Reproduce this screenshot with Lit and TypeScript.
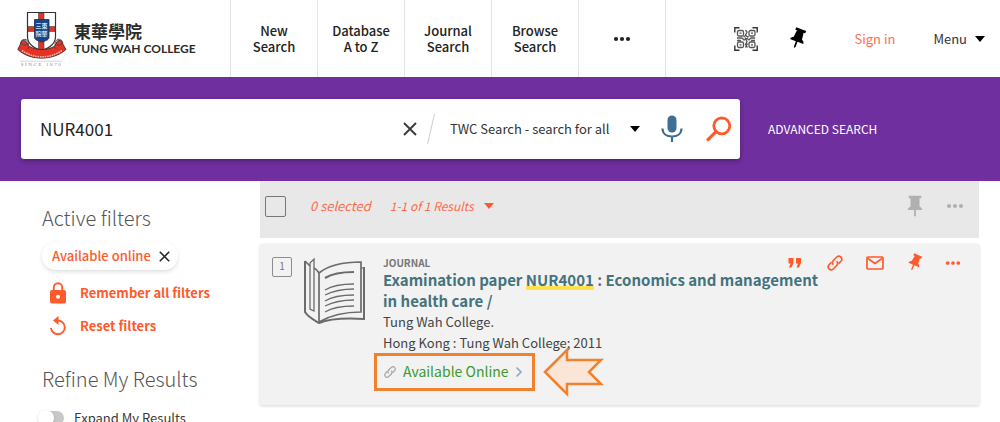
import { LitElement, html, css, svg } from "lit";
import { customElement, state } from "lit/decorators.js";

const pinShape = svg`<path fill="currentColor" d="M4 0h12v3h-2l1 8c2 1 3 2 3 4h-7v6l-1 2-1-2v-6H2c0-2 1-3 3-4l1-8H4z"/>`;

const icons = {
  pin: html`<svg width="18" height="22" viewBox="0 0 20 23" aria-hidden="true"><path fill="currentColor" d="M3 0h14v3h-2v9c2 1 3 2 3 4h-7v7H9v-7H2c0-2 1-3 3-4V3H3z"/></svg>`,
  pinTilted: html`<svg width="22" height="24" viewBox="-2 -1 25 26" aria-hidden="true"><g transform="rotate(20 10 12)">${pinShape}</g></svg>`,
  pinSmall: html`<svg width="18" height="20" viewBox="-2 -1 25 26" aria-hidden="true"><g transform="rotate(24 10 12)">${pinShape}</g></svg>`,
  dots: html`<svg width="18" height="6" viewBox="0 0 18 6" aria-hidden="true"><g fill="currentColor"><circle cx="3" cy="3" r="2.1"/><circle cx="9" cy="3" r="2.1"/><circle cx="15" cy="3" r="2.1"/></g></svg>`,
  caret: html`<svg width="10" height="6" viewBox="0 0 10 6" aria-hidden="true"><path fill="currentColor" d="M0 0h10L5 6z"/></svg>`,
  close: html`<svg class="x" viewBox="0 0 14 14" aria-hidden="true"><path d="M1 1l12 12M13 1L1 13" fill="none" stroke="currentColor" stroke-width="1.9"/></svg>`,
  mic: html`<svg width="22" height="28" viewBox="0 0 22 28" aria-hidden="true"><rect x="6.5" y="0.5" width="9" height="17" rx="4.500" fill="#3d7096"/><path d="M1.500 13.500c0 5 4 8 9.500 8s9.500-3 9.500-8M11 21.500V27" fill="none" stroke="#3d7096" stroke-width="2.200"/></svg>`,
  search: html`<svg width="26" height="26" viewBox="0 0 26 26" aria-hidden="true"><circle cx="15.800" cy="9.800" r="8" fill="none" stroke="#ff5a2b" stroke-width="2.800"/><path d="M9.800 15.800L2 23.600" stroke="#ff5a2b" stroke-width="3.200" stroke-linecap="round"/></svg>`,
  qr: html`<svg width="24" height="24" viewBox="0 0 24 24" fill="none" stroke="#555" aria-hidden="true">
    <path d="M.8 5.500V.8h4.700M18.500.8h4.700v4.700M23.200 18.500v4.700h-4.700M5.500 23.200H.8v-4.700" stroke-width="1.400" stroke="#333"/>
    <g stroke-width="1.300"><rect x="3.500" y="3.500" width="6" height="5.500" rx="1.500"/><rect x="15" y="3.500" width="6" height="5.500" rx="1.500"/><rect x="3.500" y="15" width="6" height="5.500" rx="1.500"/><rect x="15" y="15" width="6" height="5.500" rx="1.500"/>
    <path d="M5.500 6.200h2M17 6.200h2M5.500 17.800h2M17 17.800h2M11.500 3l1.500 2-1.500 3 2 2 1.500-.5M3 11h5l2 2 3-1.500 2 1.500 2-2h4M3 13.500h4M11 10.500l2 4-1.500 3 2 3M9.500 10l2-1.500M17 13.500h4M11.500 20.500l2-4"/></g></svg>`,
  lock: html`<svg width="18" height="22" viewBox="0 0 18 22" aria-hidden="true"><path d="M4.800 9V5.500a4.200 4.200 0 0 1 8.400 0V9" fill="none" stroke="currentColor" stroke-width="1.900"/><path fill="currentColor" fill-rule="evenodd" d="M3 8h12a2 2 0 0 1 2 2v9.500a2 2 0 0 1-2 2H3a2 2 0 0 1-2-2V10a2 2 0 0 1 2-2zm6 4.700a2 2 0 1 0 0 4 2 2 0 0 0 0-4z"/></svg>`,
  reset: html`<svg width="18" height="20" viewBox="0 0 18 20" aria-hidden="true"><path d="M8 4.500h1.200A6.900 6.900 0 1 1 2 12" fill="none" stroke="currentColor" stroke-width="1.900"/><path fill="currentColor" d="M9.500 0v9L4 4.500z"/></svg>`,
  quote: html`<svg width="14" height="10" viewBox="0 0 14 10" aria-hidden="true"><path fill="currentColor" d="M.5 0h5v5L3.500 9.500H1L2.500 5.500h-2zM8 0h5v5l-2 4.500H8.500L10 5.500H8z"/></svg>`,
  link: html`<svg class="chain" viewBox="0 0 18 18" fill="none" stroke="currentColor" stroke-width="1.600" aria-hidden="true"><path d="M7.300 10.700a3 3 0 0 1 0-4.200l3.700-3.700a3 3 0 0 1 4.200 4.200l-2.600 2.600"/><path d="M10.700 7.300a3 3 0 0 1 0 4.200L7 15.200A3 3 0 0 1 2.800 11l2.600-2.600"/></svg>`,
  mail: html`<svg width="18" height="14" viewBox="0 0 18 14" aria-hidden="true"><rect x="1" y="1" width="16" height="12" rx="1" fill="none" stroke="currentColor" stroke-width="1.700"/><path d="M2 2.500l7 5 7-5" fill="none" stroke="currentColor" stroke-width="1.700"/></svg>`,
  chevron: html`<svg width="8" height="12" viewBox="0 0 8 12" aria-hidden="true"><path d="M1.500 1.500L6 6l-4.500 4.500" fill="none" stroke="#8fa9bf" stroke-width="1.700"/></svg>`,
};

const crest = html`<svg width="50" height="56" viewBox="0 0 50 56" role="img" aria-label="Crest">
  <path d="M10.500 1.500h28v24c0 7-6 11.500-14 14-8-2.500-14-7-14-14z" fill="#fff" stroke="#333" stroke-width="1.200"/>
  <path d="M21.500 2h5.500v37l-2.500 1-3-1zM11 15.500h27v5H11z" fill="#e23324" stroke="#444" stroke-width=".6"/>
  <path d="M17.500 8.500h14.500v18c0 2.500-4 3.500-7.200 4.500-3.200-1-7.300-2-7.300-4.500z" fill="#17458c" stroke="#222b45" stroke-width=".8"/>
  <g fill="#cfe0f5" font-family="Noto Sans CJK TC, sans-serif" font-size="6" font-weight="700"><text x="18.500" y="16.500">三東</text><text x="18.500" y="25">院華</text></g>
  <path d="M10 32c-1-4-7-3-6.500 1L.8 38.500C13 50 36 50 49 38.500L45.800 33c.5-4-5.500-5-6.500-1l-2 3.500c-8 4-17 4-25 0z" fill="#e23324" stroke="#43282a" stroke-width=".9"/>
  <path d="M9 29c-3-2-6 1-4 4 2 2 5 1 5-1M40.500 29c3-2 6 1 4 4-2 2-5 1-5-1M12.300 35.500l-2 2.500M37.300 35.500l2 2.500M8 28c3 1 4 4 3 7M41.500 28c-3 1-4 4-3 7" fill="none" stroke="#444" stroke-width=".9"/>
  <path d="M5 39.500c12 8.500 28 8.500 40 0" fill="none" stroke="#f9b5ab" stroke-width="1.600" stroke-dasharray="1.600 .8"/>
  <path d="M3 50.200h42" stroke="#bbb" stroke-width=".6"/>
  <text x="24.500" y="55" text-anchor="middle" fill="#888" font-family="Liberation Serif, serif" font-size="5" letter-spacing="1.600">SINCE 1870</text>
</svg>`;

const book = html`<svg width="64" height="68" viewBox="0 0 64 68" fill="none" stroke="#6b6b6b" aria-hidden="true">
  <path d="M2 4v51c3 5 9 8 14 11 12-5 28-5 45-4V10" stroke-width="2"/>
  <path d="M2 4l5 5M11 11c2 1 4 3 5 5v50M16 16C26 8 43 5 58 5v50c-15 0-30 3-42 10" stroke-width="1.700"/>
  <path d="M7 7v45l4 2V2L7 6z" stroke-width="1.300"/>
  <path d="M58 11h3" stroke-width="1.200"/>
  <path d="M22 21c8-5 18-6 29-6" stroke-width="2.200"/>
  <path d="M22 33c8-5 18-6 29-6M22 38c8-4 18-6 29-6M22 44c8-5 18-6 29-6M22 49c8-4 18-6 29-6M22 55c8-5 18-6 29-6" stroke-width="1.300"/>
</svg>`;

@customElement("app-root")
export class AppRoot extends LitElement {
  @state() private query = "NUR4001";

  static styles = css`
    :host {
      display: block;
      height: 100vh;
      overflow: hidden;
      background: #fff;
      color: #3a3a3a;
      font-family: "Noto Sans CJK SC", "Noto Sans", sans-serif;
      font-size: 13px;
      line-height: 20px;
    }
    * { box-sizing: border-box; }
    svg { display: block; flex: none; }
    button, input, select {
      font: inherit;
      color: inherit;
      background: none;
      border: 0;
      padding: 0;
      margin: 0;
      outline: none;
    }
    button { cursor: pointer; display: flex; align-items: center; justify-content: center; }
    a { color: inherit; text-decoration: none; }
    h1, h2, h3, p { margin: 0; font-weight: inherit; }
    .x { width: 14px; height: 14px; }

    .top { display: flex; height: 77px; }
    .brand { display: flex; align-items: center; gap: 7px; width: 230px; padding-left: 17px; color: #2b2b2b; }
    .names { display: flex; flex-direction: column; }
    .zh { font: 700 17px/20px "Noto Sans CJK TC", sans-serif; }
    .en { font: 700 12px/16px Lato, sans-serif; white-space: nowrap; }
    .nav { display: flex; border-right: 1px solid #e4e4e4; }
    .tab {
      width: 87px;
      border-left: 1px solid #e4e4e4;
      display: flex;
      align-items: center;
      justify-content: center;
      text-align: center;
      line-height: 16px;
      font-weight: 500;
      color: #222;
    }
    .user { margin-left: auto; display: flex; align-items: center; padding-right: 15px; }
    .user .pinned { color: #000; margin: 0 45px 0 29px; }
    .signin { color: #ff6c4d; margin-right: 38px; }
    .menu { gap: 8px; color: #333; }
    .menu svg { color: #000; }

    .band { background: #6f2f9f; padding: 22px 21px; display: flex; align-items: center; gap: 28px; }
    .box {
      flex: 0 1 719px;
      height: 60px;
      background: #fff;
      border-radius: 3px;
      box-shadow: 0 2px 5px rgba(0, 0, 0, 0.3);
      display: flex;
      align-items: center;
      padding: 0 8px 0 19px;
    }
    .term { flex: 1; min-width: 0; font-size: 17px; line-height: 24px; color: #222; }
    .slash { margin: 0 15px 0 10px; }
    .scope { position: relative; display: flex; align-items: center; margin-right: 21px; color: #000; }
    .scope select { appearance: none; width: 190px; color: #333; }
    .scope svg { position: absolute; right: 0; pointer-events: none; }
    .go { margin-left: 23px; }
    .advanced { color: #fff; font-size: 12px; }

    .body { display: grid; grid-template-columns: 260px minmax(0, 1fr); padding-right: 21px; }
    .side { padding: 24px 20px 0 42px; }
    .heading { font-size: 20px; line-height: 26px; font-weight: 300; color: #555; }
    .chip {
      display: inline-flex;
      align-items: center;
      gap: 8px;
      height: 28px;
      margin-top: 11px;
      padding: 0 8px 0 10px;
      border-radius: 14px;
      box-shadow: 0 2px 4px rgba(0, 0, 0, 0.12);
      color: #ff5a2b;
      font-weight: 500;
    }
    .chip .x { width: 11px; height: 11px; color: #222; }
    .tools { display: flex; flex-direction: column; align-items: flex-start; gap: 9px; margin: 11px 0 28px; }
    .tool { height: 24px; gap: 13px; margin-left: 7px; color: #ff5a2b; font-weight: 700; }
    .switch { display: flex; align-items: center; gap: 10px; margin-top: 16px; }
    .switch input {
      appearance: none;
      display: flex;
      align-items: center;
      width: 22px;
      height: 14px;
      border-radius: 7px;
      background: #c8c8c8;
    }
    .switch input::before {
      content: "";
      width: 16px;
      height: 16px;
      margin-left: -4px;
      flex: none;
      border-radius: 50%;
      background: #fff;
      box-shadow: 0 1px 3px rgba(0, 0, 0, 0.2);
    }

    .bar {
      display: flex;
      align-items: center;
      height: 57px;
      padding: 0 15px 7px 5px;
      background: #e8e8e8;
      color: #ff6c4d;
      font-style: italic;
    }
    .pick { appearance: none; width: 21px; height: 21px; border: 1px solid #777; border-radius: 2px; }
    .count { margin: 0 19px 0 24px; }
    .pages { gap: 10px; font-size: 12px; font-style: italic; }
    .pages svg { color: #ff5a2b; }
    .bulk { margin-left: auto; display: flex; align-items: center; gap: 22px; color: #b0b0b0; }

    .item {
      display: flex;
      align-items: flex-start;
      margin-top: 6px;
      min-height: 161px;
      padding: 13px 8px 12px 12px;
      background: #f2f2f2;
      box-shadow: 0 1px 3px rgba(0, 0, 0, 0.16);
    }
    .num {
      width: 20px;
      height: 20px;
      border: 1px solid #8d8d8d;
      border-radius: 2px;
      text-align: center;
      font-size: 10px;
      line-height: 16px;
      color: #777;
    }
    .cover { margin: 0 16px 0 11px; }
    .info { flex: 1; min-width: 0; color: #444; line-height: 21px; }
    .head { display: flex; align-items: center; justify-content: space-between; height: 12px; }
    .kind { font-size: 10px; line-height: 14px; font-weight: 700; color: #777; }
    .actions { display: flex; align-items: center; color: #ff5a2b; }
    .actions button { width: 40px; }
    .actions button:last-child { width: 36px; }
    .actions .dots svg { width: 16px; }
    .chain { width: 18px; height: 18px; }
    .title { max-width: 448px; font-size: 15px; line-height: 21px; font-weight: 700; color: #44727d; }
    .title mark { color: inherit; background: linear-gradient(#ffe14d, #ffe14d) 0 17px / 100% 4px no-repeat; }
    .access { position: relative; display: inline-flex; align-items: center; margin-top: 8px; }
    .online { display: flex; align-items: center; gap: 6px; color: #3c9a2c; font-size: 14px; }
    .online .chain { width: 14px; height: 14px; color: #a5a5a5; }
    .frame { position: absolute; inset: -8px -12px -9px -9px; border: 3px solid #f0812f; pointer-events: none; }
    .arrow { position: absolute; left: calc(100% + 20px); top: -14px; }
  `;

  private onInput(e: Event) {
    this.query = (e.target as HTMLInputElement).value;
  }

  render() {
    return html`
      <header class="top">
        <a class="brand" href="#">
          ${crest}
          <span class="names"><span class="zh" lang="zh-Hant">東華學院</span><span class="en">TUNG WAH COLLEGE</span></span>
        </a>
        <nav class="nav">
          <a class="tab" href="#">New<br />Search</a>
          <a class="tab" href="#">Database<br />A to Z</a>
          <a class="tab" href="#">Journal<br />Search</a>
          <a class="tab" href="#">Browse<br />Search</a>
          <button class="tab" aria-label="More">${icons.dots}</button>
        </nav>
        <div class="user">
          <button aria-label="QR code">${icons.qr}</button>
          <button class="pinned" aria-label="Pinned items">${icons.pinTilted}</button>
          <a class="signin" href="#">Sign in</a>
          <button class="menu">Menu ${icons.caret}</button>
        </div>
      </header>

      <form class="band" @submit=${(e: Event) => e.preventDefault()}>
        <div class="box">
          <input class="term" type="text" aria-label="Search term" .value=${this.query} @input=${this.onInput} />
          <button type="button" aria-label="Clear" @click=${() => (this.query = "")}>${icons.close}</button>
          <svg class="slash" width="8" height="30" viewBox="0 0 8 30" aria-hidden="true"><path d="M7.500 0L.5 30" stroke="#ccc" /></svg>
          <div class="scope">
            <select aria-label="Search scope"><option>TWC Search - search for all</option></select>
            ${icons.caret}
          </div>
          <button type="button" aria-label="Voice search">${icons.mic}</button>
          <button class="go" aria-label="Search">${icons.search}</button>
        </div>
        <a class="advanced" href="#">ADVANCED SEARCH</a>
      </form>

      <div class="body">
        <aside class="side">
          <h2 class="heading">Active filters</h2>
          <button class="chip">Available online ${icons.close}</button>
          <div class="tools">
            <button class="tool">${icons.lock} Remember all filters</button>
            <button class="tool">${icons.reset} Reset filters</button>
          </div>
          <h2 class="heading">Refine My Results</h2>
          <label class="switch"><input type="checkbox" role="switch" />Expand My Results</label>
        </aside>

        <main>
          <div class="bar">
            <input class="pick" type="checkbox" aria-label="Select all" />
            <span class="count">0 selected</span>
            <button class="pages">1-1 of 1 Results ${icons.caret}</button>
            <div class="bulk">
              <button aria-label="Pin selected">${icons.pin}</button>
              <button aria-label="More actions">${icons.dots}</button>
            </div>
          </div>

          <article class="item">
            <span class="num">1</span>
            <div class="cover">${book}</div>
            <div class="info">
              <div class="head">
                <span class="kind">JOURNAL</span>
                <div class="actions">
                  <button aria-label="Cite">${icons.quote}</button>
                  <button aria-label="Permalink">${icons.link}</button>
                  <button aria-label="E-mail">${icons.mail}</button>
                  <button aria-label="Pin">${icons.pinSmall}</button>
                  <button class="dots" aria-label="More">${icons.dots}</button>
                </div>
              </div>
              <h3 class="title"><a href="#">Examination paper <mark>NUR4001</mark> : Economics and management in health care /</a></h3>
              <p>Tung Wah College.</p>
              <p>Hong Kong : Tung Wah College; 2011</p>
              <div class="access">
                <a class="online" href="#">${icons.link}<span>Available Online</span>${icons.chevron}</a>
                <span class="frame"></span>
                <svg class="arrow" width="62" height="50" viewBox="0 0 62 50" aria-hidden="true">
                  <path d="M2 25L24 3v10h34L46 25l12 12H24v10z" fill="#fbe5d6" stroke="#f0812f" stroke-width="2.500" />
                </svg>
              </div>
            </div>
          </article>
        </main>
      </div>
    `;
  }
}
